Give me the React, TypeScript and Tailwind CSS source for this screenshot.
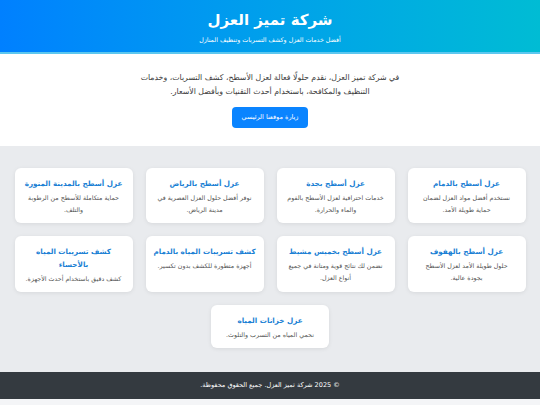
import React from 'react';

interface Service {
  title: string;
  desc: string;
}

const services: Service[] = [
  { title: 'عزل أسطح بالدمام', desc: 'نستخدم أفضل مواد العزل لضمان\nحماية طويلة الأمد.' },
  { title: 'عزل أسطح بجدة', desc: 'خدمات احترافية لعزل الأسطح بالفوم والماء والحرارة.' },
  { title: 'عزل أسطح بالرياض', desc: 'نوفر أفضل حلول العزل العصرية في مدينة الرياض.' },
  { title: 'عزل أسطح بالمدينة المنورة', desc: 'حماية متكاملة للأسطح من الرطوبة والتلف.' },
  { title: 'عزل أسطح بالهفوف', desc: 'حلول طويلة الأمد لعزل الأسطح\nبجودة عالية.' },
  { title: 'عزل أسطح بخميس مشيط', desc: 'نضمن لك نتائج قوية ومتانة في جميع أنواع العزل.' },
  { title: 'كشف تسريبات المياه بالدمام', desc: 'أجهزة متطورة للكشف بدون تكسير.' },
  { title: 'كشف تسريبات المياه\nبالأحساء', desc: 'كشف دقيق باستخدام أحدث الأجهزة.' },
  { title: 'عزل خزانات المياه', desc: 'نحمي المياه من التسرب والتلوث.' }
];

const ServiceCard: React.FC<{ service: Service }> = ({ service }) => (
  <div className="w-[118px] bg-white rounded-md shadow-[0_1px_4px_rgba(0,0,0,0.08)] px-[6px] pt-[9px] pb-[7px] text-center">
    <h3 className="text-[7.2px] font-bold leading-[13px] text-[#1a7fd4] mb-[2px] whitespace-pre-line">{service.title}</h3>
    <p className="text-[6.3px] leading-[12px] text-[#555] whitespace-pre-line">{service.desc}</p>
  </div>
);

export default function App() {
  return (
    <div dir="rtl" className="w-[540px] min-h-[405px] bg-[#f4f5f7]" style={{ fontFamily: '"DejaVu Sans", sans-serif' }}>
      <header className="h-[54px] pt-[3px] bg-gradient-to-r from-[#0080ff] to-[#00bcd4] border-b-2 border-[#5cc7ef] flex flex-col items-center justify-center text-white">
        <h1 className="text-[15px] font-bold leading-[20px]">شركة تميز العزل</h1>
        <p className="text-[6.3px] leading-[11px] mt-[4px]">أفضل خدمات العزل وكشف التسربات وتنظيف المنازل</p>
      </header>

      <section className="bg-white flex flex-col items-center pt-[17px] pb-[18px]">
        <p className="max-w-[262px] text-center text-[7.8px] leading-[14px] text-[#3a3a3a]">
          في شركة تميز العزل، نقدم حلولًا فعالة لعزل الأسطح، كشف التسربات، وخدمات التنظيف والمكافحة، باستخدام أحدث التقنيات وبأفضل الأسعار.
        </p>
        <button className="mt-[8px] w-[76px] h-[21px] rounded bg-[#0a84ff] text-white text-[6.5px]">زيارة موقعنا الرئيسي</button>
      </section>

      <section className="bg-[#e9ebee] pt-[22px] pb-[24px] flex flex-wrap justify-center gap-[13px] px-[14px]">
        {services.map((s) => (
          <ServiceCard key={s.title} service={s} />
        ))}
      </section>

      <footer className="h-[27px] bg-[#343a40] flex items-center justify-center">
        <p className="text-white text-[6.5px]">© 2025 شركة تميز العزل. جميع الحقوق محفوظة.</p>
      </footer>
    </div>
  );
}
